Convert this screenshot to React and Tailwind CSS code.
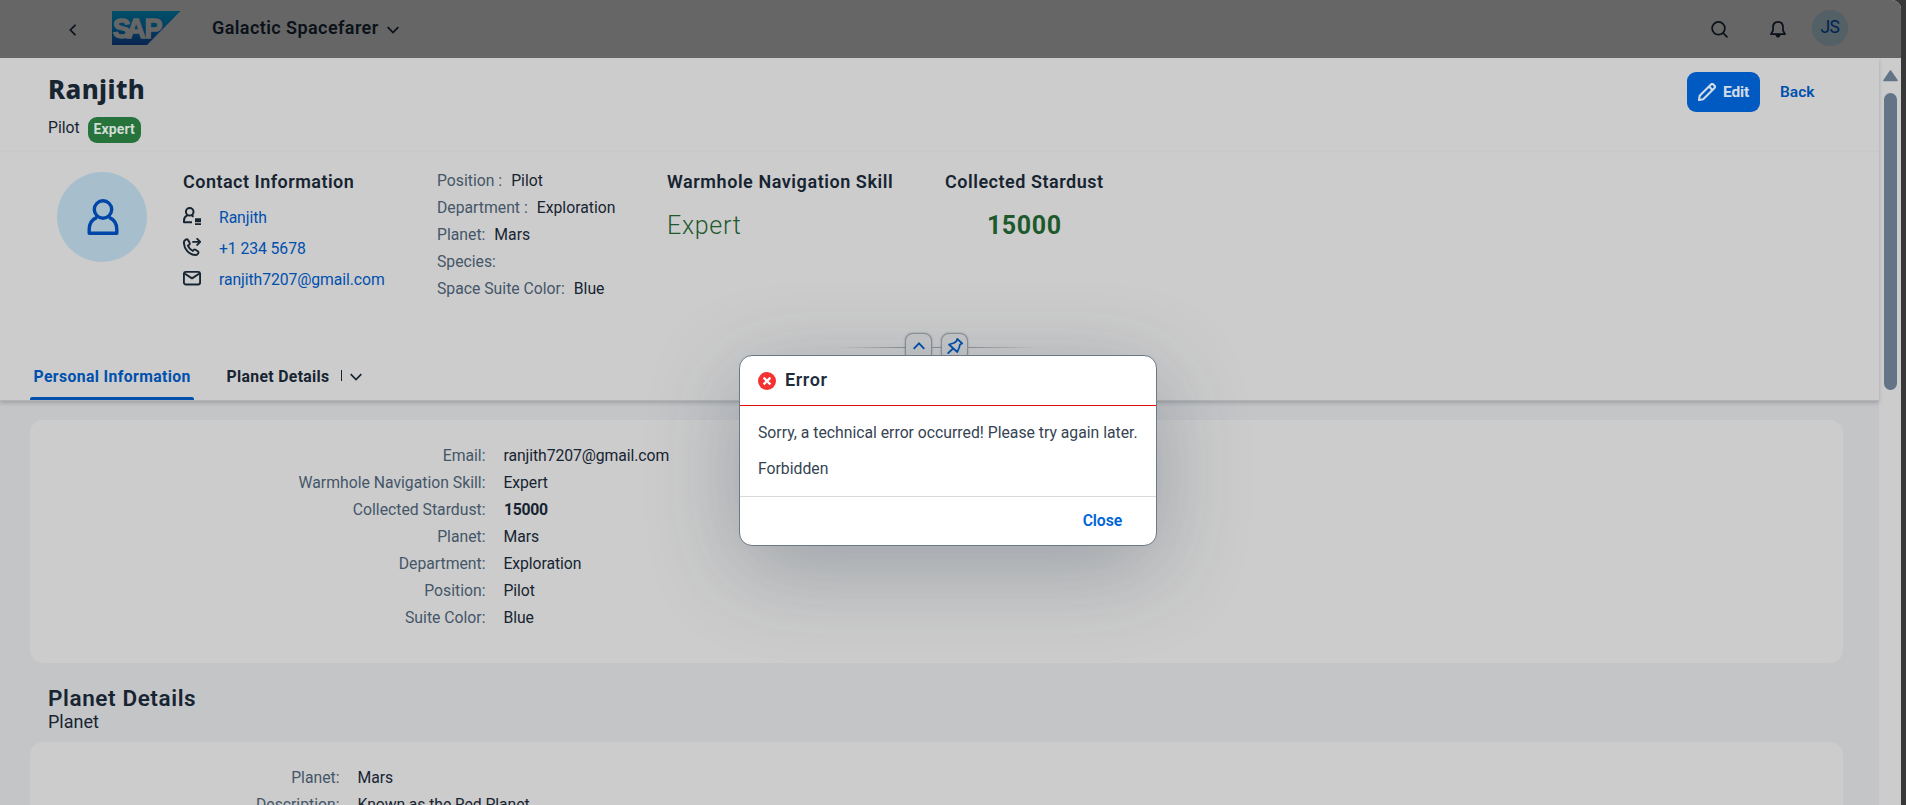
import React from "react";

const facts = [
  ["Position :", "Pilot"],
  ["Department :", "Exploration"],
  ["Planet:", "Mars"],
  ["Species:", ""],
  ["Space Suite Color:", "Blue"],
];

const personal = [
  ["Email:", "ranjith7207@gmail.com"],
  ["Warmhole Navigation Skill:", "Expert"],
  ["Collected Stardust:", "15000"],
  ["Planet:", "Mars"],
  ["Department:", "Exploration"],
  ["Position:", "Pilot"],
  ["Suite Color:", "Blue"],
];

const planet = [
  ["Planet:", "Mars"],
  ["Description:", "Known as the Red Planet."],
];

function Logo() {
  return (
    <svg className="ml-[36px] h-[34px] w-[69px]" viewBox="0 0 69 34">
      <defs>
        <linearGradient id="logo" x1="0" y1="0" x2="0" y2="1">
          <stop offset="0" stopColor="#004f68" />
          <stop offset="0.5" stopColor="#003f63" />
          <stop offset="1" stopColor="#0a2450" />
        </linearGradient>
      </defs>
      <path d="M0 0H68.500L35 34H0Z" fill="url(#logo)" />
      <text x="0.8 14.2 32.6" y="26.600" fontFamily="Liberation Sans, sans-serif" fontWeight="700" fontSize="27" fill="#666" stroke="#666" strokeWidth="1.300">SAP</text>
    </svg>
  );
}

function ShellBar() {
  return (
    <header className="flex h-[58px] items-center bg-[#666666] pb-[2px] text-[#0b1119]">
      <svg className="ml-[68px] mt-[3px] h-3 w-2" viewBox="0 0 8 12" fill="none" stroke="currentColor" strokeWidth="1.700">
        <path d="M7.500 0.800L2.300 6l5.200 5.200" />
      </svg>
      <Logo />
      <span className="ml-[31px] w-[166px] text-[18px] leading-6 font-semibold whitespace-nowrap tracking-[0.42px]">Galactic Spacefarer</span>
      <svg className="mt-[3px] ml-[9px] h-2 w-3" viewBox="0 0 12 8" fill="none" stroke="currentColor" strokeWidth="1.700">
        <path d="M0.700 1.200L6 6.600l5.300-5.400" />
      </svg>
      <div className="ml-auto flex items-center pr-[53px]">
        <svg className="mt-[2px] h-[17px] w-[17px]" viewBox="0 0 17 17" fill="none" stroke="currentColor" strokeWidth="1.700" strokeLinecap="round">
          <circle cx="7.500" cy="7.300" r="6.400" />
          <path d="M12.200 12l3.700 3.800" />
        </svg>
        <svg className="ml-[42px] mt-[2px] h-[17px] w-[16px]" viewBox="0 0 16 17" fill="none" stroke="currentColor" strokeWidth="1.700" strokeLinejoin="round">
          <path d="M3 6.500C3 3 5 0.900 8 0.900S13 3 13 6.500V9.500L15 13.200H1L3 9.500Z" />
          <path d="M5 13.500h6l-1.200 2a2 2 0 0 1-3.600 0Z" fill="currentColor" stroke="none" />
        </svg>
        <div className="ml-[26px] flex h-[36px] w-[36px] items-center justify-center rounded-full bg-[#536066] pb-[2px] text-[17.500px] tracking-[-0.5px] text-[#002354]">JS</div>
      </div>
    </header>
  );
}

function PersonIcon() {
  return (
    <svg className="ml-px h-[36px] w-[32px]" viewBox="0 0 32 36" fill="none" stroke="#0046a8" strokeWidth="3.400" strokeLinejoin="round">
      <circle cx="16" cy="10.500" r="8.700" />
      <path d="M10 18.300C4.500 20.500 2.200 25 2.200 30.500V34.200H29.800V30.500C29.800 25 27.500 20.500 22 18.300" />
    </svg>
  );
}

const iconBase = "mb-[3px] h-[18px] w-[18px] text-[#172432]";

function ContactIcon() {
  return (
    <svg className={iconBase} viewBox="0 0 18 18" fill="none" stroke="currentColor" strokeWidth="2" strokeLinejoin="round">
      <circle cx="6.700" cy="4.800" r="3.800" />
      <path d="M4.500 8.200C2 9.500 1 11.500 1 13.500V15.300H9M8.800 8.200l1.700 1.500" />
      <path d="M12 11.300h6v3.900h-6ZM12 16.300h6v1.600h-6Z" fill="currentColor" stroke="none" />
    </svg>
  );
}

function CallIcon() {
  return (
    <svg className={iconBase} viewBox="0 0 18 18" fill="none" stroke="currentColor" strokeWidth="1.900" strokeLinejoin="round" strokeLinecap="round">
      <path d="M2.800 1.600C1.500 2.300 0.900 3.300 0.900 4.500C0.900 11 6 17 12.500 17C13.900 17 15 16.200 15.400 15C15.600 14.300 15.400 13.700 14.800 13.300L12.500 11.700C11.800 11.300 11.100 11.400 10.600 12L9.800 13C7.500 11.800 5.800 9.900 4.900 7.600L6.200 6.700C6.800 6.200 7 5.500 6.600 4.800L5.200 2.200C4.600 1.300 3.700 1.100 2.800 1.600Z" />
      <path d="M10 3.900H17M14.200 0.900L17.200 3.900L14.200 6.900" />
    </svg>
  );
}

function MailIcon() {
  return (
    <svg className={iconBase} viewBox="0 0 18 18" fill="none" stroke="currentColor" strokeWidth="1.900" strokeLinejoin="round">
      <rect x="0.900" y="2.900" width="16.200" height="12.600" rx="2" />
      <path d="M1.500 4.500L9 9.400L16.500 4.500" />
    </svg>
  );
}

const contacts = [
  [ContactIcon, "Ranjith"],
  [CallIcon, "+1 234 5678"],
  [MailIcon, "ranjith7207@gmail.com"],
];

function ObjectHeader() {
  return (
    <section className="relative z-10 flex h-[343px] shrink-0 flex-col border-b border-[#b3b4b5] bg-[#cccccc] shadow-[0_2px_4px_rgba(30,40,50,0.22)]">
      <div className="flex h-[94px] shrink-0 justify-between border-b border-[#c9c9c9] pt-[14px] pr-[63px] pl-[48px]">
        <div className="pt-px">
          <h1 className="font-['Noto_Sans',sans-serif] text-[25.800px] leading-8 font-extrabold tracking-[0.4px]">Ranjith</h1>
          <div className="mt-[9px] flex">
            <span className="leading-[27px]">Pilot</span>
            <span className="mt-[3px] ml-[8px] flex h-[26px] w-[53px] items-center justify-center rounded-[9px] bg-[#26733b] text-[14px] pb-[2px] font-bold tracking-[0.1px] text-[#d2dbd5]">Expert</span>
          </div>
        </div>
        <div className="flex h-[40px]">
          <button className="flex w-[73px] items-center rounded-[9px] bg-[#005ac2] pl-[11px] text-[15.500px] font-bold text-[#d4dce6]">
            <svg className="h-[18px] w-[18px]" viewBox="0 0 18 18" fill="none" stroke="currentColor" strokeWidth="2.100" strokeLinejoin="round">
              <path d="M1 17L1.700 12.800L13 1.500C13.800 0.700 14.600 0.800 15.300 1.500L16.500 2.700C17.200 3.400 17.200 4.200 16.500 5L5.200 16.300Z" />
              <path d="M11 3.500L14.500 7" />
            </svg>
            <span className="ml-[7px] tracking-[-0.1px]">Edit</span>
          </button>
          <button className="ml-[20px] w-[36px] text-left text-[15.500px] font-semibold text-[#0050ae]">Back</button>
        </div>
      </div>

      <div className="flex pl-[57px]">
        <div className="mt-[20px] flex h-[90px] w-[90px] items-center justify-center rounded-full bg-[#a7bfcc]">
          <PersonIcon />
        </div>
        <div className="ml-[36px] w-[254px] pt-[18px]">
          <h2 className="text-[18px] leading-6 font-semibold tracking-[0.48px]">Contact Information</h2>
          <ul className="mt-[8px]">
            {contacts.map(([Icon, text]) => (
              <li key={text} className="flex h-[31px] items-center text-[#0050ae]">
                <Icon />
                <span className="ml-[18px] tracking-[-0.08px]">{text}</span>
              </li>
            ))}
          </ul>
        </div>
        <dl className="w-[230px] pt-[15px]">
          {facts.map(([label, value]) => (
            <div key={label} className="flex h-[27px] items-center gap-[9px]">
              <dt className="text-[#445668]">{label}</dt>
              <dd>{value}</dd>
            </div>
          ))}
        </dl>
        <div className="w-[278px] pt-[18px]">
          <h2 className="text-[18px] leading-6 font-semibold tracking-[0.56px]">Warmhole Navigation Skill</h2>
          <p className="mt-[16px] text-[25px] leading-8 font-light tracking-[0.7px] text-[#1e592e]">Expert</p>
        </div>
        <div className="pt-[18px]">
          <h2 className="text-[18px] leading-6 font-semibold tracking-[0.52px]">Collected Stardust</h2>
          <p className="mt-[16px] text-center text-[25px] leading-8 font-bold tracking-[0.6px] text-[#1e592e]">15000</p>
        </div>
      </div>

      <nav className="mt-auto flex h-[49px] items-stretch pl-[30px] leading-[27px] font-bold">
        <div className="flex w-[164px] flex-col justify-between pt-[12px] text-[#0050ae]">
          <span className="pl-[3.500px] tracking-[0.38px]">Personal Information</span>
          <span className="h-[3px] rounded-t-[2px] bg-[#0050ae]" />
        </div>
        <span className="ml-[32.500px] pt-[12px] tracking-[0.34px]">Planet Details</span>
        <span className="mt-[19px] ml-[11px] h-[11px] w-px bg-[#172432]" />
        <svg className="mt-[22px] ml-[8px] h-2 w-3" viewBox="0 0 12 8" fill="none" stroke="#172432" strokeWidth="1.700">
          <path d="M0.700 1.200L6 6.600l5.300-5.400" />
        </svg>
      </nav>

      <div className="absolute top-[275px] left-[840px] flex h-[28px] w-[195px] items-center">
        <span className="h-px w-[65px] bg-linear-to-r from-transparent to-[#8d9297]" />
        <span className="flex h-[28px] w-[27px] items-center justify-center rounded-[8px] border border-[#8d929a] bg-[#c8c9ca] shadow-[0_0_2px_rgba(30,40,50,0.4)]">
          <svg className="mb-[2px] h-2 w-3" viewBox="0 0 12 8" fill="none" stroke="#0050ae" strokeWidth="1.900">
            <path d="M0.700 6.800L6 1.400l5.300 5.400" />
          </svg>
        </span>
        <span className="h-px w-[9px] bg-[#8d9297]" />
        <span className="flex h-[28px] w-[27px] items-center justify-center rounded-[8px] border border-[#8d929a] bg-[#c8c9ca] shadow-[0_0_2px_rgba(30,40,50,0.4)]">
          <svg className="mb-[3px] h-[16px] w-[16px]" viewBox="0 0 16 16" fill="none" stroke="#0050ae" strokeWidth="1.800" strokeLinejoin="round">
            <path d="M10.300 0.900L15.200 5.500L13 6.500L12.200 9.500L10.300 14L2 6.500L7 5L9.600 3Z" />
            <path d="M6 10.500L0.600 15.600" />
          </svg>
        </span>
        <span className="h-px grow bg-linear-to-r from-[#8d9297] to-transparent" />
      </div>
    </section>
  );
}

function Form({ rows, labelClass }) {
  return (
    <dl className="pt-[22px]">
      {rows.map(([label, value]) => (
        <div key={label} className="flex h-[27px] items-center">
          <dt className={"text-right text-[#445668] " + labelClass}>{label}</dt>
          <dd className={value === "15000" ? "ml-[18.500px] font-bold tracking-[-0.3px]" : "ml-[18px] tracking-[-0.08px]"}>{value}</dd>
        </div>
      ))}
    </dl>
  );
}

function ErrorDialog() {
  return (
    <div role="alertdialog" className="absolute top-[355px] left-[739px] z-20 flex h-[191px] w-[418px] flex-col rounded-[13px] border border-[#6b7987] bg-white text-[#1d2d3e] shadow-[0_22px_90px_rgba(34,53,72,0.29)]">
      <div className="flex h-[50px] shrink-0 items-center border-b border-[#e01010] pb-px pl-[18px]">
        <svg className="mt-[2px] h-[18px] w-[18px]" viewBox="0 0 18 18">
          <circle cx="9" cy="9" r="9" fill="#f53232" />
          <path d="M5.600 5.600l6.800 6.800M12.400 5.600l-6.800 6.800" stroke="#fff" strokeWidth="2.200" />
        </svg>
        <h2 className="ml-[9px] text-[18px] leading-6 font-semibold tracking-[0.6px]">Error</h2>
      </div>
      <div className="h-[91px] shrink-0 border-b border-[#d9d9d9] pt-[13px] pl-[18px] leading-[27px] whitespace-nowrap text-[#354353]">
        <p>Sorry, a technical error occurred! Please try again later.</p>
        <p className="mt-[9px]">Forbidden</p>
      </div>
      <div className="flex grow items-center justify-end pr-[34px] pb-px font-semibold text-[#0064d9]">
        <span className="tracking-[-0.1px]">Close</span>
      </div>
    </div>
  );
}

export default function App() {
  return (
    <div className="relative h-[805px] w-[1906px] overflow-hidden bg-[#383838] font-['Roboto',sans-serif] text-[15.750px] leading-[27px] text-[#172432]">
      <div className="flex h-full w-[1901px] flex-col overflow-hidden rounded-tr-[9px] bg-[#cccccc]">
        <ShellBar />
        <div className="flex h-[747px] overflow-hidden">
          <main className="flex w-[1879px] flex-col bg-[#c4c5c7]">
            <ObjectHeader />
            <section className="mt-[19px] mr-[36px] ml-[30px] h-[243px] shrink-0 rounded-[13px] bg-[#cccccc]">
              <Form rows={personal} labelClass="w-[455.500px]" />
            </section>
            <div className="mt-[22px] ml-[48px] shrink-0">
              <h2 className="text-[22.500px] leading-[26px] font-semibold tracking-[0.6px]">Planet Details</h2>
              <p className="text-[18px] leading-[22px]">Planet</p>
            </div>
            <section className="mt-[9px] mr-[36px] ml-[30px] h-[200px] shrink-0 rounded-[13px] bg-[#cccccc]">
              <Form rows={planet} labelClass="w-[309.500px]" />
            </section>
          </main>
          <div className="flex w-[22px] flex-col items-center bg-[#cccccc] pt-[12px] pl-px">
            <svg className="h-[12px] w-[15px]" viewBox="0 0 15 12">
              <path d="M7.500 1L14 10.500H1Z" fill="#627486" stroke="#627486" strokeWidth="1.500" strokeLinejoin="round" />
            </svg>
            <span className="mt-[11px] h-[297px] w-[13px] rounded-full bg-[#627486]" />
          </div>
        </div>
      </div>
      <ErrorDialog />
    </div>
  );
}
